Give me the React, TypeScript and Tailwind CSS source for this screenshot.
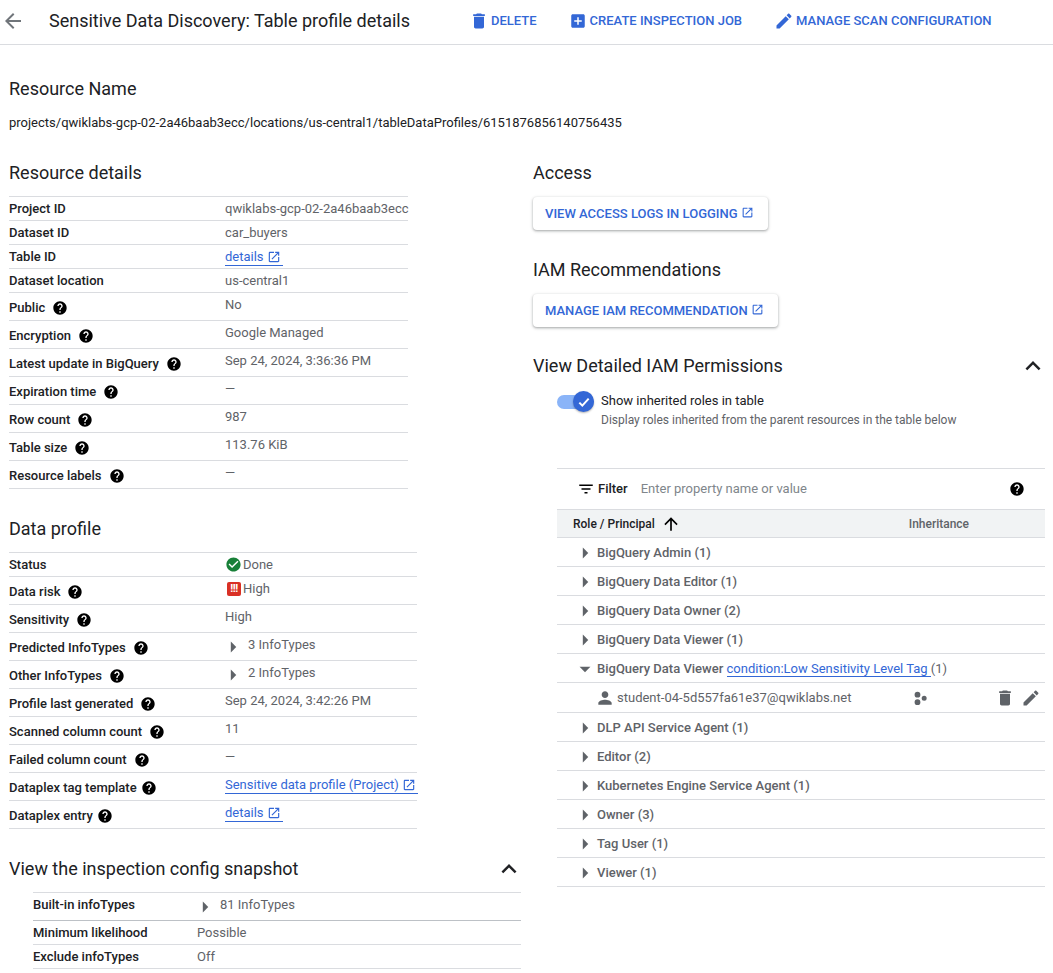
import { ReactNode } from "react";

const paths = {
  back: "M20 11H7.83l5.59-5.59L12 4l-8 8 8 8 1.41-1.41L7.83 13H20v-2z",
  trash: "M6 19c0 1.1.9 2 2 2h8c1.1 0 2-.9 2-2V7H6v12zM19 4h-3.5l-1-1h-5l-1 1H5v2h14V4z",
  addBox: "M19 3H5c-1.11 0-2 .9-2 2v14c0 1.1.89 2 2 2h14c1.1 0 2-.9 2-2V5c0-1.1-.9-2-2-2zm-2 10h-4v4h-2v-4H7v-2h4V7h2v4h4v2z",
  edit: "M3 17.25V21h3.75L17.81 9.94l-3.75-3.75L3 17.25zM20.71 7.04c.39-.39.39-1.02 0-1.41l-2.34-2.34c-.39-.39-1.02-.39-1.41 0l-1.83 1.83 3.75 3.75 1.83-1.83z",
  open: "M19 19H5V5h7V3H5c-1.11 0-2 .9-2 2v14c0 1.1.89 2 2 2h14c1.1 0 2-.9 2-2v-7h-2v7zM14 3v2h3.59l-9.83 9.83 1.41 1.41L19 6.41V10h2V3h-7z",
  help: "M12 2C6.48 2 2 6.48 2 12s4.48 10 10 10 10-4.48 10-10S17.52 2 12 2zm1 17h-2v-2h2v2zm2.07-7.75l-.9.92C13.45 12.9 13 13.5 13 15h-2v-.5c0-1.1.45-2.1 1.17-2.83l1.24-1.26c.37-.36.59-.86.59-1.41 0-1.1-.9-2-2-2s-2 .9-2 2H8c0-2.21 1.79-4 4-4s4 1.79 4 4c0 .88-.36 1.68-.93 2.25z",
  less: "M12 8l-6 6 1.41 1.41L12 10.83l4.59 4.58L18 14z",
  filter: "M10 18h4v-2h-4v2zM3 6v2h18V6H3zm3 7h12v-2H6v2z",
  up: "M4 12l1.41 1.41L11 7.83V20h2V7.83l5.58 5.59L20 12l-8-8-8 8z",
  person: "M12 12c2.21 0 4-1.79 4-4s-1.79-4-4-4-4 1.79-4 4 1.79 4 4 4zm0 2c-2.67 0-8 1.34-8 4v2h16v-2c0-2.66-5.33-4-8-4z",
  right: "M10 17l5-5-5-5v10z",
  down: "M7 10l5 5 5-5z",
  check: "M12 2C6.48 2 2 6.48 2 12s4.48 10 10 10 10-4.48 10-10S17.52 2 12 2zm-2 15l-5-5 1.41-1.41L10 14.17l7.59-7.59L19 8l-9 9z",
  inherit: "M9 4.5a3.5 3.5 0 1 0 0 7 3.5 3.5 0 0 0 0-7zM9 13.5a3.5 3.5 0 1 0 0 7 3.5 3.5 0 0 0 0-7zM17 9.2a3 3 0 1 0 0 6 3 3 0 0 0 0-6z",
};

const Icon = ({ d, className }: { d: string; className: string }) => (
  <svg viewBox="0 0 24 24" fill="currentColor" className={`shrink-0 ${className}`}>
    <path d={d} />
  </svg>
);

const Help = () => <Icon d={paths.help} className="w-[16px] h-[16px] text-[#000]" />;

const Heading = ({ children }: { children: ReactNode }) => (
  <h2 className="text-[18px] leading-[24px] text-[#202124]">{children}</h2>
);

const DocLink = ({ children }: { children: ReactNode }) => (
  <span className="inline-flex items-center gap-[3px] h-[18px] pr-[2px] text-[#3367d6] border-b border-[#3367d6]">
    {children}
    <Icon d={paths.open} className="w-[14px] h-[14px]" />
  </span>
);

const InfoTypes = ({ label, iconTop }: { label: string; iconTop: string }) => (
  <span className="flex items-start">
    <Icon d={paths.right} className={`w-[26px] h-[26px] -ml-[5px] text-[#5f6368] ${iconTop}`} />
    <span className="ml-[2px]">{label}</span>
  </span>
);

type Row = { label: string; value: ReactNode; help?: boolean; tight?: boolean };

const DetailTable = ({ rows, width }: { rows: Row[]; width: string }) => (
  <div className={`${width} border-t border-[#dadce0]`}>
    {rows.map((row) => (
      <div key={row.label} className={`flex border-b border-[#dadce0] ${row.help ? "h-[28px]" : "h-[24px]"}`}>
        <div
          className={`w-[216px] shrink-0 flex items-center font-medium text-[#202124] h-full ${
            row.help ? "pt-[2px]" : ""
          } ${row.tight ? "gap-[4px]" : "gap-[7px]"}`}
        >
          {row.label}
          {row.help && <Help />}
        </div>
        <div className="leading-[23px] text-[#5f6368] whitespace-nowrap">{row.value}</div>
      </div>
    ))}
  </div>
);

const Status = ({ icon, text }: { icon: ReactNode; text: string }) => (
  <span className="flex items-center h-[23px]">
    {icon}
    {text}
  </span>
);

const resourceRows: Row[] = [
  { label: "Project ID", value: "qwiklabs-gcp-02-2a46baab3ecc" },
  { label: "Dataset ID", value: "car_buyers" },
  { label: "Table ID", value: <DocLink>details</DocLink> },
  { label: "Dataset location", value: "us-central1" },
  { label: "Public", value: "No", help: true },
  { label: "Encryption", value: "Google Managed", help: true },
  { label: "Latest update in BigQuery", value: "Sep 24, 2024, 3:36:36 PM", help: true },
  { label: "Expiration time", value: "—", help: true },
  { label: "Row count", value: "987", help: true },
  { label: "Table size", value: "113.76 KiB", help: true },
  { label: "Resource labels", value: "—", help: true },
];

const profileRows: Row[] = [
  {
    label: "Status",
    value: <Status icon={<Icon d={paths.check} className="w-[17px] h-[17px] mr-px text-[#188038]" />} text="Done" />,
  },
  {
    label: "Data risk",
    value: (
      <Status
        icon={
          <span className="w-[14px] h-[14px] ml-[2px] mr-[2px] rounded-[2px] bg-[#d93025] text-white text-[11px] leading-[14px] font-bold text-center tracking-[-0.4px]">
            !!!
          </span>
        }
        text="High"
      />
    ),
    help: true,
  },
  { label: "Sensitivity", value: "High", help: true },
  { label: "Predicted InfoTypes", value: <InfoTypes label="3 InfoTypes" iconTop="mt-[1px]" />, help: true },
  { label: "Other InfoTypes", value: <InfoTypes label="2 InfoTypes" iconTop="mt-[1px]" />, help: true },
  { label: "Profile last generated", value: "Sep 24, 2024, 3:42:26 PM", help: true },
  { label: "Scanned column count", value: "11", help: true },
  { label: "Failed column count", value: "—", help: true },
  { label: "Dataplex tag template", value: <DocLink>Sensitive data profile (Project)</DocLink>, help: true, tight: true },
  { label: "Dataplex entry", value: <DocLink>details</DocLink>, help: true, tight: true },
];

const roles = [
  "BigQuery Admin (1)",
  "BigQuery Data Editor (1)",
  "BigQuery Data Owner (2)",
  "BigQuery Data Viewer (1)",
];

const moreRoles = [
  "DLP API Service Agent (1)",
  "Editor (2)",
  "Kubernetes Engine Service Agent (1)",
  "Owner (3)",
  "Tag User (1)",
  "Viewer (1)",
];

const RoleRow = ({ children, open }: { children: ReactNode; open?: boolean }) => (
  <div className="flex items-center h-[29px] pt-px pl-[15px] font-medium text-[#5f6368] border-b border-[#dadce0]">
    <Icon d={open ? paths.down : paths.right} className="w-[26px] h-[26px] -mr-px" />
    <span className="flex-1 whitespace-nowrap">{children}</span>
  </div>
);

const OutlineButton = ({ label }: { label: string }) => (
  <div className="inline-flex items-center h-[33px] pl-[12px] pr-[14px] gap-[3px] bg-white rounded-[4px] shadow-[0_1px_2px_rgba(60,64,67,0.3),0_1px_3px_1px_rgba(60,64,67,0.15)] text-[#3367d6] font-medium">
    {label}
    <Icon d={paths.open} className="w-[13px] h-[13px] -mt-[2px]" />
  </div>
);

const HeaderAction = ({ icon, label, className }: { icon: ReactNode; label: string; className: string }) => (
  <div className={`flex items-center text-[#3367d6] font-medium ${className}`}>
    {icon}
    {label}
  </div>
);

export default function App() {
  return (
    <div className="w-[1053px] h-[973px] overflow-hidden bg-white text-[13px] leading-[20px] font-['Roboto',sans-serif] text-[#202124]">
      <header className="flex items-center h-[45px] pb-[2px] border-b border-[#dadce0]">
        <Icon d={paths.back} className="w-[24px] h-[24px] ml-px text-[#70757a]" />
        <div className="ml-[24px] text-[18px] text-[#202124] whitespace-nowrap">
          Sensitive Data Discovery: Table profile details
        </div>
        <HeaderAction
          icon={<Icon d={paths.trash} className="w-[20px] h-[20px] mr-[2px]" />}
          label="DELETE"
          className="ml-[59px]"
        />
        <HeaderAction
          icon={<Icon d={paths.addBox} className="w-[18px] h-[18px] mr-[3px]" />}
          label="CREATE INSPECTION JOB"
          className="ml-[32px]"
        />
        <HeaderAction
          icon={<Icon d={paths.edit} className="w-[20px] h-[20px] mr-[2px]" />}
          label="MANAGE SCAN CONFIGURATION"
          className="ml-[32px]"
        />
      </header>

      <div className="pl-[9px] pt-[32px]">
        <Heading>Resource Name</Heading>
        <div className="mt-[12px] leading-[20px] text-[#202124]">
          projects/qwiklabs-gcp-02-2a46baab3ecc/locations/us-central1/tableDataProfiles/6151876856140756435
        </div>

        <div className="flex mt-[28px]">
          <div className="w-[524px]">
            <Heading>Resource details</Heading>
            <div className="mt-[11px]">
              <DetailTable rows={resourceRows} width="w-[399px]" />
            </div>

            <div className="mt-[28px]">
              <Heading>Data profile</Heading>
            </div>
            <div className="mt-[11px]">
              <DetailTable rows={profileRows} width="w-[408px]" />
            </div>

            <div className="flex items-center justify-between mt-[28px] pr-[9px]">
              <Heading>View the inspection config snapshot</Heading>
              <Icon d={paths.less} className="w-[30px] h-[30px] -my-[3px] text-[#202124]" />
            </div>
            <div className="ml-[24px] mt-[11px] w-[488px] border-t border-[#dadce0]">
              <div className="flex h-[28px] border-b border-[#bdc1c6]">
                <div className="w-[164px] font-medium leading-[23px]">Built-in infoTypes</div>
                <div className="leading-[23px] text-[#5f6368]">
                  <InfoTypes label="81 InfoTypes" iconTop="mt-[1px]" />
                </div>
              </div>
              {[
                ["Minimum likelihood", "Possible"],
                ["Exclude infoTypes", "Off"],
              ].map(([label, value]) => (
                <div key={label} className="flex items-center h-[24px] border-b border-[#dadce0]">
                  <div className="w-[164px] font-medium">{label}</div>
                  <div className="text-[#5f6368]">{value}</div>
                </div>
              ))}
            </div>
          </div>

          <div className="flex-1">
            <Heading>Access</Heading>
            <div className="mt-[12px]">
              <OutlineButton label="VIEW ACCESS LOGS IN LOGGING" />
            </div>
            <div className="mt-[28px]">
              <Heading>IAM Recommendations</Heading>
            </div>
            <div className="mt-[12px]">
              <OutlineButton label="MANAGE IAM RECOMMENDATION" />
            </div>

            <div className="flex items-center justify-between mt-[27px] pr-[5px]">
              <Heading>View Detailed IAM Permissions</Heading>
              <Icon d={paths.less} className="w-[30px] h-[30px] -my-[3px] text-[#202124]" />
            </div>

            <div className="flex ml-[24px] mt-[13px]">
              <div className="relative w-[37px] h-[14px] mt-[4px] rounded-full bg-[#8ab4f8] shrink-0">
                <div className="absolute right-0 -top-[4px] w-[21px] h-[21px] rounded-full bg-[#3367d6] shadow-[0_1px_2px_rgba(0,0,0,0.3)] flex items-center justify-center">
                  <svg viewBox="0 0 24 24" fill="none" stroke="white" strokeWidth="3" className="w-[16px] h-[16px]">
                    <path d="M5 13l4.5 4.5L19 7" />
                  </svg>
                </div>
              </div>
              <div className="ml-[7px]">
                <div className="leading-[20px] text-[#202124]">Show inherited roles in table</div>
                <div className="text-[12px] leading-[18px] text-[#5f6368]">
                  Display roles inherited from the parent resources in the table below
                </div>
              </div>
            </div>

            <div className="ml-[24px] mt-[39px] w-[488px]">
              <div className="flex items-center h-[41px] pb-px border-t border-[#dadce0] pl-[20px] pr-[20px]">
                <Icon d={paths.filter} className="w-[18px] h-[18px] text-[#000]" />
                <span className="ml-[3px] font-medium text-[#202124]">Filter</span>
                <span className="ml-[13px] flex-1 text-[#80868b]">Enter property name or value</span>
                <Help />
              </div>
              <div className="flex items-center h-[29px] bg-[#f1f3f4] border-y border-[#dadce0] pl-[16px] text-[12px] font-medium">
                <span className="text-[#202124]">Role / Principal</span>
                <Icon d={paths.up} className="w-[20px] h-[20px] ml-[6px] text-[#000]" />
                <span className="ml-[228px] text-[#5f6368]">Inheritance</span>
              </div>
              {roles.map((role) => (
                <RoleRow key={role}>{role}</RoleRow>
              ))}
              <RoleRow open>
                BigQuery Data Viewer{" "}
                <span className="text-[#3367d6] font-normal border-b border-[#3367d6]">
                  condition:Low Sensitivity Level Tag{" "}
                </span>
                <span className="font-normal"> (1)</span>
              </RoleRow>
              <div className="flex items-center h-[30px] pl-[38px] pr-[4px] text-[#5f6368] border-b border-[#dadce0]">
                <Icon d={paths.person} className="w-[20px] h-[20px] mr-[2px]" />
                <span className="w-[293px] whitespace-nowrap">student-04-5d557fa61e37@qwiklabs.net</span>
                <Icon d={paths.inherit} className="w-[20px] h-[20px] text-[#5f6368]" />
                <span className="flex-1" />
                <Icon d={paths.trash} className="w-[20px] h-[20px]" />
                <Icon d={paths.edit} className="w-[20px] h-[20px] ml-[6px]" />
              </div>
              {moreRoles.map((role) => (
                <RoleRow key={role}>{role}</RoleRow>
              ))}
            </div>
          </div>
        </div>
      </div>
    </div>
  );
}
